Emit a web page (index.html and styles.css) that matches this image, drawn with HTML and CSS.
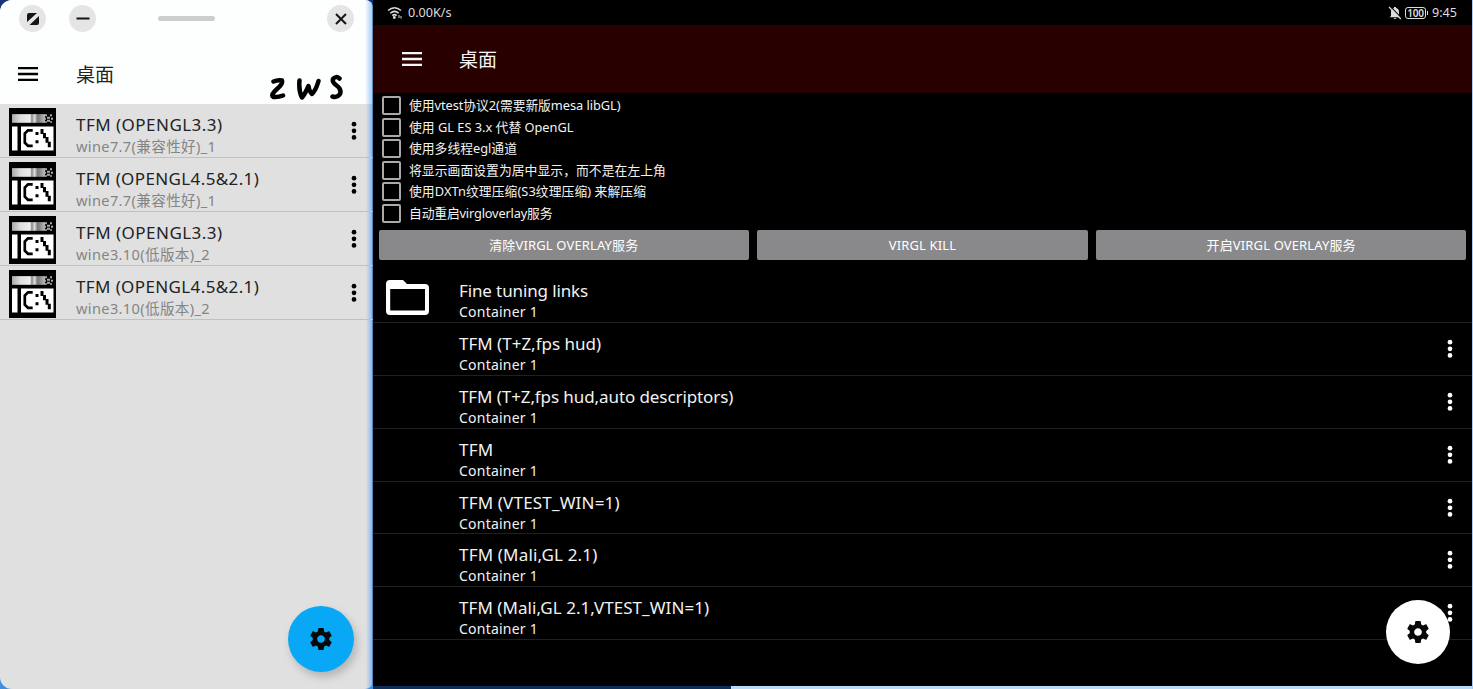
FILE: index.html
```html
<!DOCTYPE html>
<html lang="zh-CN">
<head>
<meta charset="utf-8">
<title>桌面</title>
<link rel="stylesheet" href="styles.css">
</head>
<body>
<svg width="0" height="0" class="defs">
  <defs>
    <linearGradient id="bar"><stop offset="0" stop-color="#aaa"/><stop offset=".25" stop-color="#ddd"/><stop offset=".55" stop-color="#eee"/><stop offset=".6" stop-color="#888"/><stop offset=".68" stop-color="#ddd"/><stop offset=".78" stop-color="#777"/><stop offset="1" stop-color="#bbb"/></linearGradient>
    <symbol id="cmd" viewBox="0 0 47 47" preserveAspectRatio="none">
      <rect width="47" height="47" fill="#000"/>
      <rect x="3" y="6" width="33" height="8.5" fill="url(#bar)"/>
      <path d="M36 6h2v2h-2zM41 6h2v2h-2zM38 8.500h3v2h-3zM35 9.500h2v2h-2zM42 9.500h2v2h-2zM38 11.500h3v2h-3zM36 13h2v1.500h-2zM41 13h2v1.500h-2z" fill="#aaa"/>
      <path d="M3 18h5.500v23.500H3zM12 18h32.500v23.500H12z" fill="#fff"/>
      <path d="M23.700 21.800H19L15.800 25V34L19 37H23.700" fill="none" stroke="#000" stroke-width="2.700"/>
      <path d="M26.500 23.500h3v3h-3zM26.500 31.500h3v3h-3zM31.500 20.500h3v5h-3zM34 24.500h3v5h-3zM36.500 28.500h3v5.500h-3zM38.800 33h3v5.500h-3z"/>
    </symbol>
    <symbol id="menu" viewBox="0 0 20 14"><path d="M0 1.200h20M0 7h20M0 12.800h20" stroke="currentColor" stroke-width="2.300"/></symbol>
    <symbol id="more" viewBox="0 0 6 20"><g fill="currentColor"><circle cx="3" cy="3.200" r="2.350"/><circle cx="3" cy="9.800" r="2.350"/><circle cx="3" cy="16.400" r="2.350"/></g></symbol>
    <symbol id="gear" viewBox="2 2 20 20"><path fill="currentColor" fill-rule="evenodd" d="M19.430 12.980c.04-.32.07-.64.07-.98s-.03-.66-.07-.98l2.110-1.650c.19-.15.24-.42.12-.64l-2-3.460c-.12-.22-.39-.3-.61-.22l-2.490 1c-.52-.4-1.080-.73-1.690-.98l-.38-2.650C14.460 2.180 14.250 2 14 2h-4c-.25 0-.46.18-.49.42l-.38 2.650c-.61.25-1.170.59-1.690.98l-2.490-1c-.23-.09-.49 0-.61.22l-2 3.460c-.13.22-.07.49.12.64l2.110 1.650c-.04.32-.07.65-.07.98s.03.66.07.98l-2.110 1.650c-.19.15-.24.42-.12.64l2 3.460c.12.22.39.3.61.22l2.490-1c.52.4 1.080.73 1.690.98l.38 2.650c.03.24.24.42.49.42h4c.25 0 .46-.18.49-.42l.38-2.650c.61-.25 1.170-.59 1.690-.98l2.490 1c.23.09.49 0 .61-.22l2-3.460c.12-.22.07-.49-.12-.64l-2.110-1.650zM12 15.500c-1.930 0-3.500-1.570-3.500-3.500s1.570-3.500 3.500-3.500 3.500 1.570 3.500 3.500-1.570 3.500-3.500 3.500z"/></symbol>
  </defs>
</svg>
<div class="desktop">
  <section class="phone">
    <header class="phone-head">
      <div class="window-bar">
        <span class="round"><svg width="14" height="14" viewBox="0 0 14 14"><path d="M3 1H11L1 10V3Q1 1 3 1zM13 4V11Q13 13 11 13H3.500z" fill="#151515"/></svg></span>
        <span class="round"><svg width="14" height="14"><path d="M.5 6.500h13" stroke="#151515" stroke-width="2.200"/></svg></span>
        <span class="grip"></span>
        <span class="round last"><svg width="12" height="12"><path d="M1 1l10 10M11 1L1 11" stroke="#151515" stroke-width="2"/></svg></span>
      </div>
      <div class="phone-title">
        <svg class="menu"><use href="#menu"/></svg>
        <h1>桌面</h1>
        <svg class="scribble" width="76" height="28" viewBox="0 0 76 28" fill="none" stroke="#000" stroke-linecap="round" stroke-linejoin="round"><path d="M4.500 7.500Q9 5.500 13 6.500Q14 10 8 15Q1 21 4.500 23Q9 23.500 14 21.500M30.500 6.500Q29.500 17 33 23.500Q36 20 39.500 12Q40.500 18 43 20Q47 16 49.500 7M70.500 4.500Q67 1.500 64 5Q63 8 67 11Q73 15 71 20Q68 24 63.500 22.500" stroke-width="4.500"/></svg>
      </div>
    </header>
    <ul class="phone-list">
      <li><svg class="cmd"><use href="#cmd"/></svg><div><b class="w1">TFM (OPENGL3.3)</b><i>wine7.7(兼容性好)_1</i></div><svg class="more"><use href="#more"/></svg></li>
      <li><svg class="cmd"><use href="#cmd"/></svg><div><b class="w2">TFM (OPENGL4.5&amp;2.1)</b><i>wine7.7(兼容性好)_1</i></div><svg class="more"><use href="#more"/></svg></li>
      <li><svg class="cmd"><use href="#cmd"/></svg><div><b class="w1">TFM (OPENGL3.3)</b><i>wine3.10(低版本)_2</i></div><svg class="more"><use href="#more"/></svg></li>
      <li><svg class="cmd"><use href="#cmd"/></svg><div><b class="w2">TFM (OPENGL4.5&amp;2.1)</b><i>wine3.10(低版本)_2</i></div><svg class="more"><use href="#more"/></svg></li>
    </ul>
    <button class="fab blue"><svg><use href="#gear"/></svg></button>
  </section>

  <main class="tablet">
    <div class="status">
      <svg width="16" height="14" viewBox="0 0 16 14" fill="none" stroke="#ddd" stroke-width="1.500"><path d="M1 4.500Q7.500-1 14 4.500M3.300 7.200Q7.500 3.600 11.700 7.200M5.300 9.600Q7.500 7.700 9.700 9.600"/><circle cx="7.300" cy="11.500" r=".7"/><path d="M12 9v3M14 10v2.500" stroke-width="1"/></svg>
      <span class="speed">0.00K/s</span>
      <svg class="bell" width="14" height="14" viewBox="0 0 14 14"><path d="M3 10V6Q3 2.500 6 2V1H8V2Q11 2.500 11 6V9.500L12.500 11.200H1.500zM5.500 12H8.500Q7 13.800 5.500 12z" fill="#ddd"/><path d="M2 .2L13.800 12.300" stroke="#000" stroke-width="1.200"/><path d="M1 1L12.800 13" stroke="#ddd" stroke-width="1.200"/></svg>
      <span class="battery">100</span>
      <time>9:45</time>
    </div>
    <header class="appbar"><svg class="menu"><use href="#menu"/></svg><h1>桌面</h1></header>
    <div class="options">
      <label><span class="box"></span><span class="o1">使用vtest协议2(需要新版mesa libGL)</span></label>
      <label><span class="box"></span><span>使用 GL ES 3.x 代替 OpenGL</span></label>
      <label><span class="box"></span><span>使用多线程egl通道</span></label>
      <label><span class="box"></span><span class="o4">将显示画面设置为居中显示，而不是在左上角</span></label>
      <label><span class="box"></span><span class="o5">使用DXTn纹理压缩(S3纹理压缩) 来解压缩</span></label>
      <label><span class="box"></span><span class="o6">自动重启virgloverlay服务</span></label>
    </div>
    <div class="actions"><button>清除VIRGL OVERLAY服务</button><button>VIRGL KILL</button><button>开启VIRGL OVERLAY服务</button></div>
    <ul class="links">
      <li><svg class="folder" width="44" height="36" viewBox="0 0 44 36"><path fill="#fff" fill-rule="evenodd" d="M4 0H17L21 4H39Q43 4 43 8V31Q43 35 39 35H4Q0 35 0 31V4Q0 0 4 0zM4.200 9V30.500H39V9z"/></svg><div><b class="t0">Fine tuning links</b><i>Container 1</i></div></li>
      <li><div><b>TFM (T+Z,fps hud)</b><i>Container 1</i></div><svg class="more"><use href="#more"/></svg></li>
      <li><div><b class="t2">TFM (T+Z,fps hud,auto descriptors)</b><i>Container 1</i></div><svg class="more"><use href="#more"/></svg></li>
      <li><div><b class="t3">TFM</b><i>Container 1</i></div><svg class="more"><use href="#more"/></svg></li>
      <li><div><b class="t4">TFM (VTEST_WIN=1)</b><i>Container 1</i></div><svg class="more"><use href="#more"/></svg></li>
      <li><div><b class="t4">TFM (Mali,GL 2.1)</b><i>Container 1</i></div><svg class="more"><use href="#more"/></svg></li>
      <li><div><b class="t6">TFM (Mali,GL 2.1,VTEST_WIN=1)</b><i>Container 1</i></div><svg class="more"><use href="#more"/></svg></li>
    </ul>
    <div class="bottom-edge"></div>
    <button class="fab white"><svg><use href="#gear"/></svg></button>
  </main>
</div>
</body>
</html>
```
FILE: styles.css
```css
* { box-sizing: border-box; }
body { margin: 0; overflow: hidden; font-family: "Noto Sans", "Noto Sans CJK SC", sans-serif; }
.defs { position: absolute; }
h1 { margin: 0; font: 400 19px/24px "Noto Sans CJK SC", sans-serif; }
ul { margin: 0; padding: 0; list-style: none; }
b, i { display: block; font-weight: 400; font-style: normal; white-space: nowrap; }
button { border: 0; padding: 0; font-family: inherit; }
.desktop { display: flex; width: 1473px; height: 689px; background: linear-gradient(#173479, #3f8fe0 80%); }
.menu { width: 20px; height: 14px; flex: none; }
.more { width: 6px; height: 20px; flex: none; margin-left: auto; }

.phone { position: relative; width: 373px; height: 689px; background: linear-gradient(90deg, transparent 366px, #8ab9ef 372px, #244d83 373px), #e0e0e0; border-radius: 12px 8px 8px 12px; overflow: hidden; }
.phone-head { height: 104px; background: linear-gradient(90deg, #fdfefe 365px, #a6cdf8 372px, #244d83 373px); }
.window-bar { display: flex; align-items: center; height: 37px; padding: 0 19px; }
.round { display: flex; align-items: center; justify-content: center; width: 27px; height: 27px; border-radius: 50%; background: #e5e5e5; margin-right: 23px; }
.grip { width: 57px; height: 5px; border-radius: 3px; background: #cdcdcd; margin-left: 39px; }
.last { margin: 0 0 0 auto; }
.phone-title { display: flex; align-items: center; height: 67px; padding: 0 28px 0 18px; color: #222; }
.phone-title .menu { color: #000; margin-bottom: -6px; }
.phone-title h1 { margin: 7px 0 0 38px; }
.scribble { margin: 34px 0 0 auto; }
.phone-list li { display: flex; height: 54px; padding: 4px 16px 0 9px; border-bottom: 1px solid #bdc2c4; color: #222; }
.cmd { width: 47px; height: 48px; margin-right: 20px; flex: none; }
.phone-list b { font-size: 17px; line-height: 24px; margin-top: 5px; }
.phone-list i { font-size: 14.600px; line-height: 20px; letter-spacing: .35px; color: #858585; margin-top: -1px; }
.phone-list .more { margin-top: 13px; color: #000; }
.w1 { letter-spacing: .47px; }
.w2 { letter-spacing: .38px; }

.fab { position: absolute; border-radius: 50%; display: flex; align-items: center; justify-content: center; color: #080808; }
.fab svg { width: 22px; height: 22px; }
.blue { left: 288px; top: 606px; width: 66px; height: 66px; background: #08a8f6; box-shadow: 3px 5px 8px #0003; }
.white { left: 1013px; top: 600px; width: 64px; height: 64px; background: #fff; }

.tablet { position: relative; width: 1099px; height: 689px; background: #000; color: #f2f2f2; box-shadow: 1px 0 #a6cdf8; }
.status { display: flex; align-items: center; height: 25px; padding: 0 15px 0 14px; font-size: 12.600px; color: #ddd; }
.speed { margin-left: 5px; }
.bell { margin-left: auto; }
.battery { position: relative; width: 21px; height: 12px; margin: 0 6px 0 3px; border: 1px solid #ddd; border-radius: 3px; font: 600 10px/10px "Noto Sans", sans-serif; letter-spacing: -.2px; display: flex; justify-content: center; }
.battery::after { content: ""; position: absolute; right: -3px; top: 3px; width: 1px; height: 4px; background: #ddd; }
.appbar { display: flex; align-items: center; height: 68px; padding: 0 29px; background: #290000; color: #f6f6f6; }
.appbar h1 { margin-left: 37px; }
.options { height: 137px; padding: 2px 9px 0; }
.options label { display: flex; align-items: center; height: 21.500px; font-size: 12.800px; line-height: 20px; white-space: nowrap; }
.options label span:last-child { margin-top: -1px; }
.o1 { letter-spacing: -.05px; }
.o4 { letter-spacing: .05px; }
.o5 { letter-spacing: .07px; }
.o6 { letter-spacing: -.17px; }
.box { width: 19px; height: 19px; border: 2px solid #aaa; border-radius: 2px; margin-right: 8px; flex: none; }
.actions { display: flex; gap: 8px; padding: 0 6px; height: 30px; }
.actions button { width: 370px; border-radius: 2px; background: #89898c; color: #fff; font-size: 13px; letter-spacing: .14px; padding-bottom: 1px; }
.actions button:nth-child(2) { width: 332px; }
.links { padding-top: 10px; }
.links li { display: flex; height: 52.900px; padding: 0 19px 0 86px; border-bottom: 1px solid #202020; }
.links b { font-size: 17px; line-height: 24px; margin-top: 9px; }
.links i { font-size: 14px; line-height: 20px; letter-spacing: .22px; margin-top: -1px; }
.t0 { letter-spacing: -.12px; }
.t2 { letter-spacing: -.09px; }
.t3 { letter-spacing: .3px; }
.t4 { letter-spacing: .18px; }
.t6 { letter-spacing: .06px; }
.links .more { margin-top: 16px; color: #fff; }
.links .folder { margin: 10px 29px 0 -73px; }
.bottom-edge { position: absolute; left: 0; right: 0; bottom: 0; height: 3px; background: linear-gradient(90deg, #0c2d57 358px, #b7d9fb 358px); }
```
